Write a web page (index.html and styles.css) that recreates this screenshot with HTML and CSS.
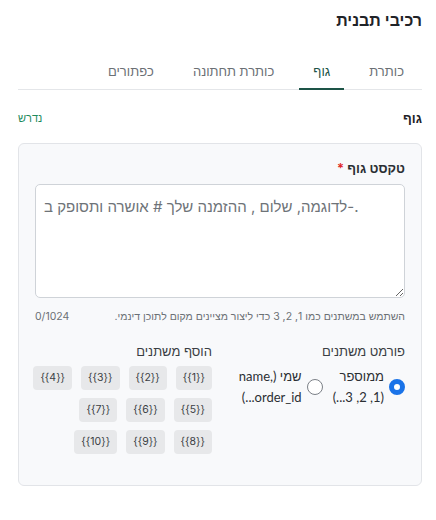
FILE: index.html
```html
<!DOCTYPE html>
<html lang="he" dir="rtl">
<head>
    <meta charset="utf-8">
    <title>רכיבי תבנית</title>
    <link rel="stylesheet" href="styles.css">
</head>
<body>
    <div id="panel">
        <h2 class="panel-title">רכיבי תבנית</h2>

        <div class="tabs">
            <div class="tab">כותרת</div>
            <div class="tab active">גוף</div>
            <div class="tab">כותרת תחתונה</div>
            <div class="tab">כפתורים</div>
        </div>

        <div class="section-head">
            <span class="section-name">גוף</span>
            <span class="required">נדרש</span>
        </div>

        <div class="card">
            <label class="field-label" for="bodyText">טקסט גוף <span class="star">*</span></label>
            <textarea id="bodyText" placeholder="לדוגמה, שלום , ההזמנה שלך # אושרה ותסופק ב-."></textarea>
            <div class="hint-row">
                <span>השתמש במשתנים כמו 1, 2, 3 כדי ליצור מציינים מקום לתוכן דינמי.</span>
                <span class="counter">0/1024</span>
            </div>

            <div class="vars">
                <div class="var-format">
                    <div class="sub-label">פורמט משתנים</div>
                    <div class="radios">
                        <label class="radio">
                            <span class="dot checked"></span>
                            <span class="radio-text num">ממוספר<br>(1, 2, 3...)</span>
                        </label>
                        <label class="radio">
                            <span class="dot"></span>
                            <span class="radio-text named">שמי (name, order_id...)</span>
                        </label>
                    </div>
                </div>
                <div class="var-add">
                    <div class="sub-label">הוסף משתנים</div>
                    <div class="chip-rows">
                        <div class="chip-row">
                            <span class="chip">{{1}}</span>
                            <span class="chip">{{2}}</span>
                            <span class="chip">{{3}}</span>
                            <span class="chip">{{4}}</span>
                        </div>
                        <div class="chip-row">
                            <span class="chip">{{5}}</span>
                            <span class="chip">{{6}}</span>
                            <span class="chip">{{7}}</span>
                        </div>
                        <div class="chip-row">
                            <span class="chip">{{8}}</span>
                            <span class="chip">{{9}}</span>
                            <span class="chip">{{10}}</span>
                        </div>
                    </div>
                </div>
            </div>
        </div>
    </div>
</body>
</html>
```
FILE: styles.css
```css
body {
    font-family: Inter, "Noto Sans", sans-serif;
    background-color: #fff;
    color: #1f2328;
    margin: 0;
}

#panel {
    padding: 10px 14px 0 18px;
}

.panel-title {
    margin: 0;
    font-size: 16px;
    font-weight: 600;
    line-height: 20px;
}

.tabs {
    display: flex;
    gap: 11px;
    margin-top: 27px;
    padding-right: 4px;
    border-bottom: 1px solid #e4e6e9;
}

.tab {
    padding: 6px 14px 9px;
    line-height: 16px;
    font-size: 13px;
    font-weight: 500;
    color: #6b7075;
    border-bottom: 2px solid transparent;
    margin-bottom: -1px;
}

.tab.active {
    color: #1d5447;
    border-bottom-color: #1d5447;
}

.section-head {
    display: flex;
    justify-content: space-between;
    align-items: center;
    margin-top: 20px;
    line-height: 16px;
}

.section-name {
    font-size: 13px;
    font-weight: 700;
}

.required {
    font-size: 11px;
    color: #1e8a5c;
}

.card {
    margin-top: 17px;
    background-color: #f8f9fb;
    border: 1px solid #e2e4e8;
    border-radius: 6px;
    padding: 16px 16px 31px 16px;
}

.field-label {
    display: block;
    font-size: 13px;
    font-weight: 600;
    line-height: 16px;
    color: #2b2f33;
    margin-bottom: 8px;
}

.star {
    color: #e02424;
}

textarea {
    display: block;
    direction: ltr;
    width: 100%;
    box-sizing: border-box;
    height: 114px;
    padding: 12px 8px;
    border: 1px solid #cfd3d8;
    border-radius: 5px;
    font-family: Inter, "Noto Sans", sans-serif;
    font-size: 15px;
    background: #fff;
    resize: vertical;
}

textarea::placeholder {
    color: #6e7378;
}

.hint-row {
    display: flex;
    justify-content: space-between;
    margin-top: 12px;
    font-size: 10.5px;
    line-height: 14px;
    color: #6b7075;
}

.vars {
    display: flex;
    margin-top: 19px;
}

.var-format {
    width: 193px;
    flex-shrink: 0;
}

.sub-label {
    font-size: 13px;
    font-weight: 500;
    line-height: 16px;
    color: #3a3e43;
    margin-bottom: 7px;
}

.radios {
    display: flex;
    gap: 10px;
}

.radio {
    display: flex;
    align-items: center;
    gap: 5px;
    font-family: Lato, "Noto Sans", sans-serif;
    font-size: 13px;
    line-height: 21px;
    color: #2b2f33;
}

.radio-text.num {
    white-space: nowrap;
}

.radio-text.named {
    width: 66px;
    flex-shrink: 0;
}

.dot {
    width: 16px;
    height: 16px;
    flex-shrink: 0;
    border: 1px solid #7b8087;
    border-radius: 50%;
    background: #fff;
    box-sizing: border-box;
}

.dot.checked {
    border: 5px solid #1a73e8;
}

.chip-rows {
    display: flex;
    flex-direction: column;
    gap: 8px;
}

.chip-row {
    display: flex;
    gap: 9px;
}

.chip {
    background-color: #e7e8ea;
    border-radius: 4px;
    padding: 0 7px;
    height: 24px;
    line-height: 24px;
    font-size: 10.5px;
    color: #3a3e43;
    text-align: center;
}
```
